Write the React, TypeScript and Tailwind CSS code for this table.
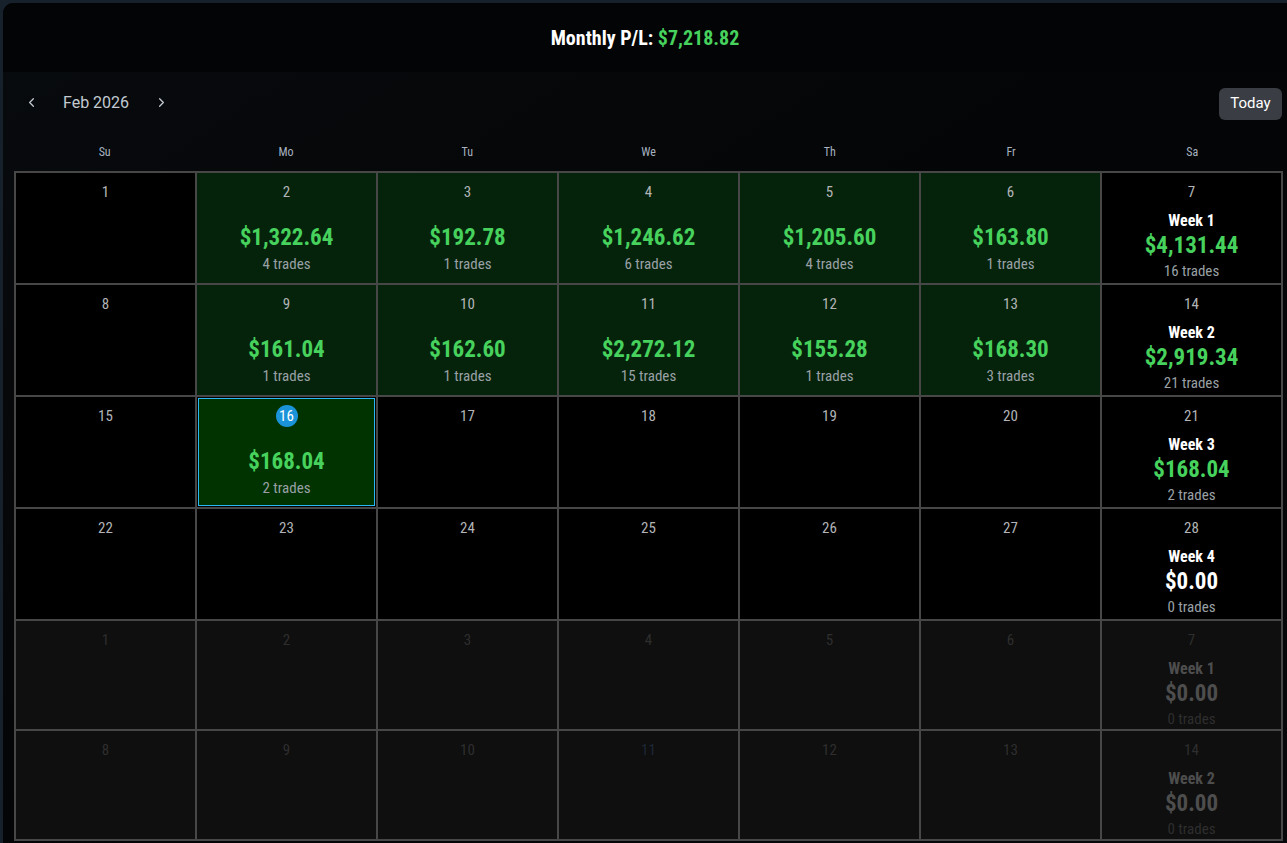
import { ChevronLeft, ChevronRight } from "lucide-react";

type Day = {
  day: number;
  pl?: string;
  trades?: number;
  faded?: boolean;
  today?: boolean;
  week?: { label: string; pl: string; trades: number; zero?: boolean };
};

const font = { fontFamily: '"Roboto Condensed", Roboto, "Liberation Sans", sans-serif' };

const rows: Day[][] = [
  [
    { day: 1 },
    { day: 2, pl: "$1,322.64", trades: 4 },
    { day: 3, pl: "$192.78", trades: 1 },
    { day: 4, pl: "$1,246.62", trades: 6 },
    { day: 5, pl: "$1,205.60", trades: 4 },
    { day: 6, pl: "$163.80", trades: 1 },
    { day: 7, week: { label: "Week 1", pl: "$4,131.44", trades: 16 } },
  ],
  [
    { day: 8 },
    { day: 9, pl: "$161.04", trades: 1 },
    { day: 10, pl: "$162.60", trades: 1 },
    { day: 11, pl: "$2,272.12", trades: 15 },
    { day: 12, pl: "$155.28", trades: 1 },
    { day: 13, pl: "$168.30", trades: 3 },
    { day: 14, week: { label: "Week 2", pl: "$2,919.34", trades: 21 } },
  ],
  [
    { day: 15 },
    { day: 16, pl: "$168.04", trades: 2, today: true },
    { day: 17 },
    { day: 18 },
    { day: 19 },
    { day: 20 },
    { day: 21, week: { label: "Week 3", pl: "$168.04", trades: 2 } },
  ],
  [
    { day: 22 },
    { day: 23 },
    { day: 24 },
    { day: 25 },
    { day: 26 },
    { day: 27 },
    { day: 28, week: { label: "Week 4", pl: "$0.00", trades: 0, zero: true } },
  ],
  [
    { day: 1, faded: true },
    { day: 2, faded: true },
    { day: 3, faded: true },
    { day: 4, faded: true },
    { day: 5, faded: true },
    { day: 6, faded: true },
    { day: 7, faded: true, week: { label: "Week 1", pl: "$0.00", trades: 0, zero: true } },
  ],
  [
    { day: 8, faded: true },
    { day: 9, faded: true },
    { day: 10, faded: true },
    { day: 11, faded: true },
    { day: 12, faded: true },
    { day: 13, faded: true },
    { day: 14, faded: true, week: { label: "Week 2", pl: "$0.00", trades: 0, zero: true } },
  ],
];

const weekdays = ["Su", "Mo", "Tu", "We", "Th", "Fr", "Sa"];

function Cell({ d, short }: { d: Day; short: boolean }) {
  const h = short ? "h-[108px]" : "h-[110px]";
  let bg = "bg-black";
  if (d.faded) bg = "bg-[#0f0f0f]";
  else if (d.today) bg = "bg-[#003300]";
  else if (d.pl) bg = "bg-[#05230b]";

  const dayColor = d.faded
    ? d.day === 11
      ? "text-[#1d2836]"
      : "text-[#2e2e2e]"
    : "text-[#b2b4b7]";

  return (
    <div
      className={`flex flex-col items-center pt-[10px] ${h} ${bg} ${
        d.today ? "shadow-[inset_0_0_0_1px_#000,inset_0_0_0_2px_#2cb8f5]" : ""
      }`}
    >
      {d.today ? (
        <div className="-my-[2px] flex h-[22px] w-[22px] items-center justify-center rounded-full bg-[#1a93d9] text-[15px] leading-none text-white">
          {d.day}
        </div>
      ) : (
        <div className={`text-[15px] leading-[18px] ${dayColor}`}>{d.day}</div>
      )}
      {d.week ? (
        <>
          <div
            className={`mt-[10px] text-[16px] font-bold leading-[20px] ${
              d.faded ? "text-[#4d4d4d]" : "text-white"
            }`}
          >
            {d.week.label}
          </div>
          <div
            className={`mt-[1px] text-[23px] font-bold leading-[28px] ${
              d.faded ? "text-[#4d4d4d]" : d.week.zero ? "text-white" : "text-[#47d15d]"
            }`}
          >
            {d.week.pl}
          </div>
          <div
            className={`mt-[2px] text-[15px] leading-[18px] ${
              d.faded ? "text-[#2e2e2e]" : "text-[#9aa0a6]"
            }`}
          >
            {d.week.trades} trades
          </div>
        </>
      ) : d.pl ? (
        <>
          <div className="mt-[23px] text-[23px] font-bold leading-[28px] text-[#47d15d]">
            {d.pl}
          </div>
          <div className="mt-[3px] text-[15px] leading-[18px] text-[#9aa0a6]">
            {d.trades} trades
          </div>
        </>
      ) : null}
    </div>
  );
}

export default function App() {
  return (
    <div className="min-h-screen overflow-hidden bg-[#16212b] pl-[3px] pt-[3px]" style={font}>
      <div className="h-[840px] rounded-tl-[10px] bg-gradient-to-br from-[#080b0e] via-[#040506] to-[#06080a] pl-[11px] pr-[3px]">
        <div className="-ml-[11px] -mr-[3px] flex h-[69px] items-center justify-center rounded-tl-[10px] bg-[#030405]">
          <h1 className="text-[20px] font-bold text-white">
            Monthly P/L: <span className="text-[#47d15d]">$7,218.82</span>
          </h1>
        </div>

        <div className="flex h-[61px] items-center justify-between">
          <div className="flex items-center" style={{ fontFamily: "Roboto, sans-serif" }}>
            <button className="flex h-8 w-[35px] items-center justify-center text-[#c3cad2]">
              <ChevronLeft size={15} strokeWidth={2} />
            </button>
            <span className="ml-[14px] text-[16px] text-[#c3cad2]">Feb 2026</span>
            <button className="ml-[16px] flex h-8 w-8 items-center justify-center text-[#c3cad2]">
              <ChevronRight size={15} strokeWidth={2} />
            </button>
          </div>
          <button
            className="mr-[2px] mt-[2px] h-8 w-[63px] rounded-md bg-[#3a3d43] text-[15px] text-white"
            style={{ fontFamily: "Roboto, sans-serif" }}
          >
            Today
          </button>
        </div>

        <div className="grid h-[38px] w-[1269px] grid-cols-7 items-center">
          {weekdays.map((w) => (
            <div key={w} className="text-center text-[12px] text-[#a6b2c0]">
              {w}
            </div>
          ))}
        </div>

        <div className="grid w-[1269px] grid-cols-7 gap-[2px] bg-[#474747] p-[2px]">
          {rows.map((r, ri) =>
            r.map((d, ci) => <Cell key={`${ri}-${ci}`} d={d} short={ri >= 4} />)
          )}
        </div>
      </div>
    </div>
  );
}
